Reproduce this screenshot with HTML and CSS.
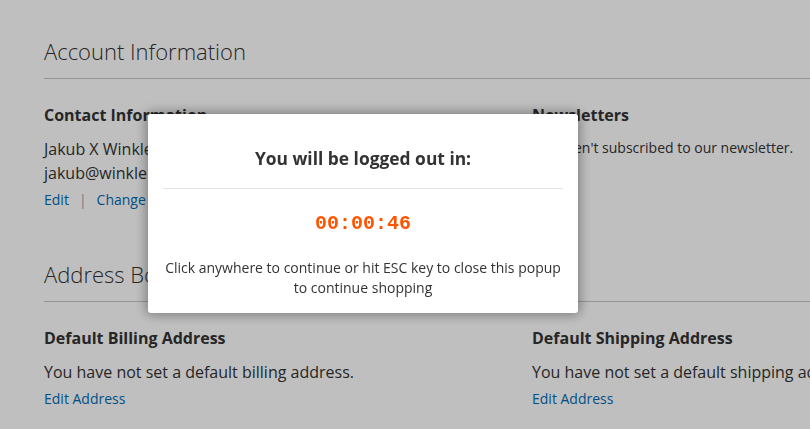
FILE: index.html
```html
<!DOCTYPE html>
<html>
<head>
<meta charset="utf-8">
<link rel="stylesheet" href="styles.css">
</head>
<body>
<main class="page">
  <section class="block">
    <h2 class="block-title">Account Information</h2>
    <div class="cols">
      <div class="box">
        <h3 class="box-title">Contact Information</h3>
        <p class="box-text">Jakub X Winkler<br>jakub@winkler.example.com</p>
        <div class="actions"><a href="#">Edit</a><span class="sep">|</span><a href="#">Change Password</a></div>
      </div>
      <div class="box">
        <h3 class="box-title">Newsletters</h3>
        <p class="box-text small">You aren't subscribed to our newsletter.</p>
      </div>
    </div>
  </section>
  <section class="block">
    <h2 class="block-title">Address Book</h2>
    <div class="cols">
      <div class="box">
        <h3 class="box-title">Default Billing Address</h3>
        <p class="box-text">You have not set a default billing address.</p>
        <div class="actions"><a href="#">Edit Address</a></div>
      </div>
      <div class="box">
        <h3 class="box-title">Default Shipping Address</h3>
        <p class="box-text">You have not set a default shipping address.</p>
        <div class="actions"><a href="#">Edit Address</a></div>
      </div>
    </div>
  </section>
</main>
<div class="overlay"></div>
<div class="modal">
  <h1 class="modal-title">You will be logged out in:</h1>
  <div class="timer">00:00:46</div>
  <p class="modal-text">Click anywhere to continue or hit ESC key to close this popup<br>to continue shopping</p>
</div>
</body>
</html>
```
FILE: styles.css
```css
html, body {
  margin: 0;
  padding: 0;
  width: 810px;
  height: 429px;
  overflow: hidden;
  background: #fff;
  font-family: "Open Sans", "Liberation Sans", sans-serif;
  color: #333;
}
.page {
  padding: 36px 0 0 44px;
  width: 1000px;
}
.block-title {
  margin: 0;
  font-size: 22px;
  font-weight: 300;
  line-height: 30px;
  padding-bottom: 12px;
  border-bottom: 1px solid #c6c6c6;
  width: 766px;
}
.cols {
  display: grid;
  grid-template-columns: 488px 488px;
  padding-top: 25px;
}
.box-title {
  margin: 0;
  font-size: 16px;
  font-weight: 700;
  line-height: 22px;
}
.box-text {
  margin: 11px 0 0;
  font-size: 16px;
  line-height: 24px;
}
.box-text.small { font-size: 14px; margin-top: 10px; }
.actions {
  margin-top: 5px;
  font-size: 14px;
  line-height: 20px;
}
.actions a { color: #006bb4; text-decoration: none; }
.sep { color: #a6a6a6; margin: 0 10px; }
.block + .block { margin-top: 49px; }
.overlay {
  position: fixed;
  inset: 0;
  background: rgba(0, 0, 0, 0.25);
}
.modal {
  position: fixed;
  left: 148px;
  top: 114px;
  width: 430px;
  height: 199px;
  box-sizing: border-box;
  background: #fff;
  border-radius: 3px;
  box-shadow: 0 0 12px 2px rgba(0, 0, 0, 0.35);
  padding: 0 15px;
  text-align: center;
}
.modal-title {
  margin: 0;
  padding: 33px 0 19px;
  font-size: 17.4px;
  font-weight: 700;
  line-height: 22px;
  color: #333;
  border-bottom: 1px solid #e3e3e3;
}
.timer {
  margin-top: 23px;
  font-family: "Liberation Mono", monospace;
  font-weight: 700;
  font-size: 20px;
  line-height: 24px;
  color: #ff5501;
}
.modal-text {
  margin: 22px 0 0;
  font-size: 14px;
  line-height: 20px;
  color: #333;
}
```
